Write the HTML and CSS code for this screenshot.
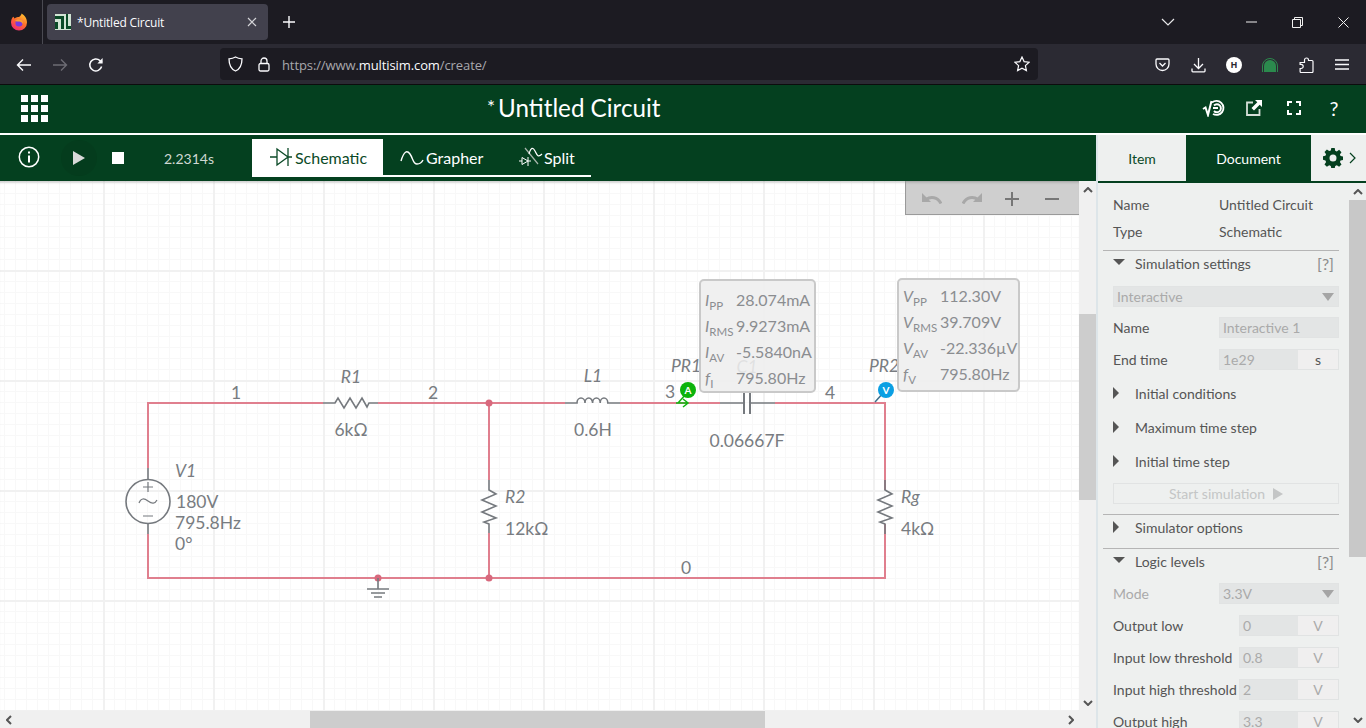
FILE: index.html
```html
<!DOCTYPE html>
<html lang="en">

<head>
  <meta charset="UTF-8">
  <meta name="viewport" content="width=device-width, initial-scale=1.0">
  <title>*Untitled Circuit</title>
  <link rel="stylesheet" href="styles.css">
</head>

<body>
  <!-- browser chrome -->
  <div class="tabbar">
    <div class="ff-slot">
      <svg width="18" height="18" viewBox="0 0 18 18">
        <defs>
          <linearGradient id="ffg" x1="0.8" y1="0" x2="0.2" y2="1">
            <stop offset="0" stop-color="#ffc62e" />
            <stop offset="0.5" stop-color="#ff6a2c" />
            <stop offset="1" stop-color="#f0257c" />
          </linearGradient>
        </defs>
        <path d="M1.500 6.500C2 5 3 4 3.500 3.800L4.500 5.500C6 4 8 4 9 4 10.500 3 11.500 1.800 11.500.5 14.500 2 17 5.500 17 9.500A8 8 0 0 1 1 9.500C1 8.500 1.200 7.500 1.500 6.500z" fill="url(#ffg)" />
        <circle cx="9" cy="10" r="3.600" fill="#7a3ae0" />
        <path d="M5 8c1.600-1.800 4.500-2.200 6.500-1 1.400 1 1.800 2.600 1.200 4-.6-1.400-1.800-2.300-3.400-2.400C8 8.500 6.200 8.600 5 8z" fill="#ffa02c" />
      </svg>
    </div>
    <div class="tab">
      <svg class="favicon" width="16" height="16" viewBox="0 0 16 16">
        <rect width="16" height="16" fill="#d2e4d4" />
        <path d="M0 2h9v13H6V5H0zM0 8h3v7H0z" fill="#0b4a27" />
        <path d="M11 0h2v12h3v3h-5z" fill="#0b4a27" />
      </svg>
      <span class="tab-title">*Untitled Circuit</span>
      <svg class="tab-x" width="10" height="10" viewBox="0 0 10 10"><path d="M1 1l8 8M9 1l-8 8" stroke="#d4d4d8" stroke-width="1.2" /></svg>
    </div>
    <div class="slot"><svg width="14" height="14" viewBox="0 0 14 14"><path d="M7 1v12M1 7h12" stroke="#fbfbfe" stroke-width="1.4" /></svg></div>
    <div class="slot slot-push"><svg width="14" height="8" viewBox="0 0 14 8"><path d="M1 1l6 6 6-6" fill="none" stroke="#e8e8ea" stroke-width="1.2" /></svg></div>
    <div class="win-btn"><svg width="11" height="2" viewBox="0 0 11 2"><path d="M0 1h11" stroke="#f0f0f0" stroke-width="1" /></svg></div>
    <div class="win-btn"><svg width="11" height="11" viewBox="0 0 11 11"><path d="M.5 2.5h8v8h-8zM2.5 2.5v-2h8v8h-2" fill="none" stroke="#f0f0f0" /></svg></div>
    <div class="win-btn"><svg width="11" height="11" viewBox="0 0 11 11"><path d="M.5.5l10 10M10.5.5l-10 10" stroke="#f0f0f0" /></svg></div>
  </div>

  <div class="navbar">
    <div class="slot"><svg width="16" height="14" viewBox="0 0 16 14"><path d="M15 7H2M7 1.5L1.5 7 7 12.5" fill="none" stroke="#fbfbfe" stroke-width="1.4" /></svg></div>
    <div class="slot"><svg width="16" height="14" viewBox="0 0 16 14"><path d="M1 7h13M9 1.5L14.5 7 9 12.5" fill="none" stroke="#6d6c74" stroke-width="1.4" /></svg></div>
    <div class="slot"><svg width="16" height="16" viewBox="0 0 16 16"><path d="M13.600 9.500A6 6 0 1 1 12 3.600L14 5.400" fill="none" stroke="#fbfbfe" stroke-width="1.500" /><path d="M14.600 1v5.400H9.400z" fill="#fbfbfe" /></svg></div>
    <div class="urlbar">
      <svg class="url-shield" width="15" height="16" viewBox="0 0 15 16"><path d="M7.500 1C5.500 2.200 3.300 2.700 1 2.800c0 5 1 10 6.500 12.200C13 12.800 14 7.800 14 2.800 11.700 2.700 9.500 2.200 7.500 1z" fill="none" stroke="#fbfbfe" stroke-width="1.300" /></svg>
      <svg class="url-lock" width="12" height="15" viewBox="0 0 12 15"><path d="M3 6.500V4a3 3 0 0 1 6 0v2.500" fill="none" stroke="#fbfbfe" stroke-width="1.300" /><rect x="1" y="6.500" width="10" height="7.500" rx="1.500" fill="none" stroke="#fbfbfe" stroke-width="1.300" /></svg>
      <span class="url-text">https://www.<b>multisim.com</b>/create/</span>
      <svg class="url-star" width="16" height="16" viewBox="0 0 16 16"><path d="M8 1l2.100 4.600 5 .6-3.700 3.400 1 4.900L8 12.100l-4.400 2.400 1-4.900L.9 6.200l5-.6z" fill="none" stroke="#fbfbfe" stroke-width="1.200" /></svg>
    </div>
    <div class="slot"><svg width="15" height="14" viewBox="0 0 15 14"><path d="M2 1h11a1 1 0 0 1 1 1v4a6.500 6.500 0 0 1-13 0V2a1 1 0 0 1 1-1z" fill="none" stroke="#fbfbfe" stroke-width="1.300" /><path d="M4.500 5l3 3 3-3" fill="none" stroke="#fbfbfe" stroke-width="1.300" /></svg></div>
    <div class="slot"><svg width="15" height="16" viewBox="0 0 15 16"><path d="M7.500 1v10M3 7l4.500 4.500L12 7M1 11.500V14a.8.8 0 0 0 .8.800h11.400A.8.800 0 0 0 14 14v-2.500" fill="none" stroke="#fbfbfe" stroke-width="1.300" /></svg></div>
    <div class="slot"><span class="h-badge">H</span></div>
    <div class="slot"><svg width="16" height="14" viewBox="0 0 16 14"><path d="M2 14V8a6 6 0 0 1 12 0v6z" fill="#2b8a4d" /><path d="M.5 14V8a7.500 7.500 0 0 1 15 0v6" fill="none" stroke="#2b8a4d" /></svg></div>
    <div class="slot"><svg width="15" height="16" viewBox="0 0 15 16"><path d="M5.500 3.500V3a2 2 0 0 1 4 0v.5H13a1 1 0 0 1 1 1v10a1 1 0 0 1-1 1H2a1 1 0 0 1-.9-1v-3h1a2 2 0 0 0 0-4.200h-1V5.500h4.400z" fill="none" stroke="#fbfbfe" stroke-width="1.200" /></svg></div>
    <div class="slot"><svg width="14" height="11" viewBox="0 0 14 11"><path d="M0 1h14M0 5.500h14M0 10h14" stroke="#fbfbfe" stroke-width="1.300" /></svg></div>
  </div>

  <!-- app header -->
  <header class="app-header">
    <svg class="waffle" width="27" height="27" viewBox="0 0 27 27" fill="#fff">
      <rect width="7" height="7" /><rect x="10" width="7" height="7" /><rect x="20" width="7" height="7" />
      <rect y="10" width="7" height="7" /><rect x="10" y="10" width="7" height="7" /><rect x="20" y="10" width="7" height="7" />
      <rect y="20" width="7" height="7" /><rect x="10" y="20" width="7" height="7" /><rect x="20" y="20" width="7" height="7" />
    </svg>
    <h1 class="app-title"><span class="star">*</span>Untitled Circuit</h1>
    <div class="app-actions">
      <div class="slot-40"><svg width="24" height="18" viewBox="0 0 24 18"><path d="M1 10l2.500-1.500L6 16 9.500 2" fill="none" stroke="#fff" stroke-width="2" /><path d="M10 3.500a7 7 0 1 1 1 11.500M12 6.500a4 4 0 1 1 0 5.500M11 9h5" fill="none" stroke="#fff" stroke-width="1.900" /></svg></div>
      <div class="slot-40"><svg width="16" height="16" viewBox="0 0 16 16"><path d="M7 2.500H1v12.500h12.500V9" fill="none" stroke="#d5dfd8" stroke-width="1.800" /><path d="M9 0h7v7l-2.300-2.300L8 10.500 5.500 8l5.800-5.700z" fill="#fff" /></svg></div>
      <div class="slot-40"><svg width="14" height="14" viewBox="0 0 14 14"><path d="M1 5V1h4M9 1h4v4M13 9v4H9M5 13H1V9" fill="none" stroke="#fff" stroke-width="2" /></svg></div>
      <div class="slot-40 help">?</div>
    </div>
  </header>

  <div class="workspace">
    <div class="left-col">
      <div class="toolbar">
        <svg class="tb-info" width="22" height="22" viewBox="0 0 22 22"><circle cx="11" cy="11" r="9.700" fill="none" stroke="#fff" stroke-width="1.500" /><rect x="10" y="9.500" width="2" height="7" fill="#fff" /><rect x="10" y="5.500" width="2" height="2" fill="#fff" /></svg>
        <div class="tb-play"><svg width="12" height="14" viewBox="0 0 12 14"><path d="M0 0l12 7-12 7z" fill="#d9d9d9" /></svg></div>
        <div class="tb-stop"></div>
        <span class="tb-time">2.2314s</span>
        <div class="tb-tabs">
          <div class="tb-tab active">
            <svg width="22" height="20" viewBox="0 0 22 20"><path d="M0 10h7M7 2v16l11-8zM18 1v18M18 10h4" fill="none" stroke="#0b4a27" stroke-width="1.300" /></svg>
            <span>Schematic</span>
          </div>
          <div class="tb-tab grapher">
            <svg width="24" height="16" viewBox="0 0 24 16"><path d="M1 12C4 2 7 1 10 5s3 10 7 10 5-2 6-4" fill="none" stroke="#fff" stroke-width="1.400" /></svg>
            <span>Grapher</span>
          </div>
          <div class="tb-tab split">
            <svg width="24" height="22" viewBox="0 0 24 22"><path d="M6 2L19 18" stroke="#a9b5ad" stroke-width="1.200" /><path d="M0 15h3M3 11.500v7l6-3.500zM9 11v9M9 15h3" fill="none" stroke="#fff" stroke-width="1" /><path d="M10 8c2-7 4-7 6-3s3 7 7 3" fill="none" stroke="#fff" stroke-width="1.200" /></svg>
            <span>Split</span>
          </div>
        </div>
      </div>

      <div class="canvas-wrap">
        <div class="canvas">
          <svg class="schematic" width="1079" height="530" viewBox="0 181 1079 530">
            <!-- wires -->
            <path class="wire" d="M148 468V403H323M378 403H565M620 403H720M775 403H885V490M885 524V578H148V534" />
            <path class="wire" d="M489 403V480M489 533V578" />
            <circle class="node" cx="489" cy="403" r="3.500" />
            <circle class="node" cx="489" cy="578" r="3.500" />
            <circle class="node" cx="378" cy="578" r="3.500" />

            <!-- R1 -->
            <path class="part" d="M323 403H335L338 398 344 408 350 398 356 408 362 398 367 407 369 403H378" />
            <!-- L1 -->
            <path class="part" d="M565 403H577a4 5 0 0 1 8 0a3.800 5 0 0 1 7.600 0a3.800 5 0 0 1 7.600 0a3.800 5 0 0 1 7.600 0H620" />
            <!-- C1 -->
            <path class="part" d="M720 403H743M750 403H775" />
            <path class="part plate" d="M744 392V414M750 392V414" />
            <!-- R2 -->
            <path class="part" d="M489 480V490L496 494 482 500 496 506 482 512 496 518 484 522 489 524V533" />
            <!-- Rg -->
            <path class="part" d="M885 480V490L892 494 878 500 892 506 878 512 892 518 880 522 885 524V534" />
            <!-- V1 -->
            <path class="part" d="M148 468V479M148 524V534" />
            <circle class="part" cx="148" cy="501.500" r="22" />
            <path class="part thin" d="M143 487h10M148 482v10M143 516h10M139 503c2-5 5-5 9-2s7 3 9-1" />
            <!-- ground -->
            <path class="part" d="M378 578V589M367 589H389M371 593H385M374 597H382" />

            <!-- probes -->
            <path class="probe-a" d="M678 403L686 394M676 403H687M683 399L688 403 683 407" />
            <path class="probe-v" d="M875 402L884 392" />
            <circle class="dot-a" cx="688" cy="390" r="8" />
            <circle class="dot-v" cx="886" cy="390" r="8" />
            <text class="dot-txt" x="688" y="394">A</text>
            <text class="dot-txt" x="886" y="394">V</text>

            <!-- labels -->
            <text class="lbl mid" x="236" y="399">1</text>
            <text class="lbl mid" x="433" y="399">2</text>
            <text class="lbl mid" x="670" y="398">3</text>
            <text class="lbl mid" x="830" y="399">4</text>
            <text class="lbl mid" x="686" y="574">0</text>
            <text class="lbl ital mid" x="351" y="383">R1</text>
            <text class="lbl mid" x="351" y="436">6kΩ</text>
            <text class="lbl ital mid" x="593" y="382">L1</text>
            <text class="lbl mid" x="593" y="436">0.6H</text>
            <text class="lbl ital mid" x="747" y="373">C1</text>
            <text class="lbl mid" x="747" y="447">0.06667F</text>
            <text class="lbl ital" x="175" y="477">V1</text>
            <text class="lbl" x="176" y="508">180V</text>
            <text class="lbl" x="175" y="529">795.8Hz</text>
            <text class="lbl" x="175" y="550">0°</text>
            <text class="lbl ital" x="505" y="503">R2</text>
            <text class="lbl" x="505" y="535">12kΩ</text>
            <text class="lbl ital" x="901" y="503">Rg</text>
            <text class="lbl" x="901" y="535">4kΩ</text>
            <text class="lbl ital mid" x="686" y="372">PR1</text>
            <text class="lbl ital mid" x="884" y="372">PR2</text>
          </svg>

          <div class="probe-box box-pr1">
            <i>I<sub>PP</sub></i><span>28.074mA</span>
            <i>I<sub>RMS</sub></i><span>9.9273mA</span>
            <i>I<sub>AV</sub></i><span>-5.5840nA</span>
            <i>f<sub>I</sub></i><span>795.80Hz</span>
          </div>
          <div class="probe-box box-pr2">
            <i>V<sub>PP</sub></i><span>112.30V</span>
            <i>V<sub>RMS</sub></i><span>39.709V</span>
            <i>V<sub>AV</sub></i><span>-22.336µV</span>
            <i>f<sub>V</sub></i><span>795.80Hz</span>
          </div>

          <div class="zoom-bar">
            <div class="zoom-btn"><svg width="20" height="11" viewBox="0 0 20 11"><path d="M0 0v9h9z" fill="#a8a8a8" /><path d="M19 10.500C15.500 4 9 3 4 6.500" fill="none" stroke="#a8a8a8" stroke-width="3" /></svg></div>
            <div class="zoom-btn"><svg width="20" height="11" viewBox="0 0 20 11"><path d="M20 0v9h-9z" fill="#a8a8a8" /><path d="M1 10.500C4.500 4 11 3 16 6.500" fill="none" stroke="#a8a8a8" stroke-width="3" /></svg></div>
            <div class="zoom-btn"><svg width="14" height="14" viewBox="0 0 14 14"><path d="M7 0v14M0 7h14" stroke="#777" stroke-width="2" /></svg></div>
            <div class="zoom-btn"><svg width="14" height="14" viewBox="0 0 14 14"><path d="M0 7h14" stroke="#777" stroke-width="2" /></svg></div>
          </div>
        </div>

        <div class="vscroll">
          <div class="arrow"><svg width="10" height="6" viewBox="0 0 10 6"><path d="M1 5l4-4 4 4" class="chev" /></svg></div>
          <div class="vthumb"></div>
          <div class="arrow arrow-end"><svg width="10" height="6" viewBox="0 0 10 6"><path d="M1 1l4 4 4-4" class="chev" /></svg></div>
        </div>
        <div class="hscroll">
          <div class="arrow"><svg width="6" height="10" viewBox="0 0 6 10"><path d="M5 1L1 5l4 4" class="chev" /></svg></div>
          <div class="hthumb"></div>
          <div class="arrow arrow-right"><svg width="6" height="10" viewBox="0 0 6 10"><path d="M1 1l4 4-4 4" class="chev" /></svg></div>
        </div>
        <div class="corner"></div>
      </div>
    </div>

    <aside class="panel">
      <div class="panel-tabs">
        <div class="ptab">Item</div>
        <div class="ptab active">Document</div>
        <div class="ptab-gear">
          <svg width="20" height="20" viewBox="0 0 20 20"><path d="M8.300 0h3.400l.5 2.700 1.600.7 2.300-1.600 2.400 2.400-1.600 2.300.7 1.600 2.400.5v3.400l-2.400.5-.7 1.600 1.600 2.300-2.400 2.400-2.300-1.600-1.600.7-.5 2.600H8.300l-.5-2.600-1.600-.7-2.300 1.600-2.400-2.400 1.600-2.300-.7-1.600L0 11.700V8.300l2.400-.5.700-1.600-1.600-2.300 2.400-2.400 2.300 1.600 1.600-.7zM10 6.500a3.500 3.500 0 1 0 0 7 3.500 3.500 0 0 0 0-7z" fill="#04401f" fill-rule="evenodd" /></svg>
          <svg width="7" height="12" viewBox="0 0 7 12"><path d="M1 1l5 5-5 5" fill="none" stroke="#04401f" stroke-width="1.200" /></svg>
        </div>
      </div>
      <div class="panel-main">
        <div class="panel-body">
          <div class="info-row"><span>Name</span><span class="info-val">Untitled Circuit</span></div>
          <div class="info-row"><span>Type</span><span class="info-val">Schematic</span></div>

          <div class="sec-head open"><span class="caret-down"></span>Simulation settings<span class="sec-help">[?]</span></div>
          <div class="select wide first">Interactive<span class="sel-arrow"></span></div>
          <div class="form-row after-select"><label>Name</label><div class="field w120">Interactive 1</div></div>
          <div class="form-row"><label>End time</label><div class="unit-field w120"><span class="val">1e29</span><span class="unit dark">s</span></div></div>
          <div class="sub-list">
            <div class="sub-row"><span class="caret-right"></span>Initial conditions</div>
            <div class="sub-row"><span class="caret-right"></span>Maximum time step</div>
            <div class="sub-row"><span class="caret-right"></span>Initial time step</div>
          </div>
          <div class="start-btn">Start simulation<span class="start-arrow"></span></div>

          <div class="sec-head"><span class="caret-right"></span>Simulator options</div>

          <div class="sec-head open"><span class="caret-down"></span>Logic levels<span class="sec-help">[?]</span></div>
          <div class="form-row first"><label class="off">Mode</label><div class="select w120">3.3V<span class="sel-arrow"></span></div></div>
          <div class="form-row"><label>Output low</label><div class="unit-field w100"><span class="val">0</span><span class="unit">V</span></div></div>
          <div class="form-row"><label>Input low threshold</label><div class="unit-field w100"><span class="val">0.8</span><span class="unit">V</span></div></div>
          <div class="form-row"><label>Input high threshold</label><div class="unit-field w100"><span class="val">2</span><span class="unit">V</span></div></div>
          <div class="form-row"><label>Output high</label><div class="unit-field w100"><span class="val">3.3</span><span class="unit">V</span></div></div>
        </div>
        <div class="pscroll">
          <div class="arrow"><svg width="10" height="6" viewBox="0 0 10 6"><path d="M1 5l4-4 4 4" class="chev" /></svg></div>
          <div class="pthumb"></div>
          <div class="arrow arrow-end"><svg width="10" height="6" viewBox="0 0 10 6"><path d="M1 1l4 4 4-4" class="chev" /></svg></div>
        </div>
      </div>
    </aside>
  </div>
</body>

</html>
```

FILE: styles.css
```css
* {
  box-sizing: border-box;
}

html,
body {
  margin: 0;
  height: 100%;
  overflow: hidden;
}

body {
  display: flex;
  flex-direction: column;
  font-family: "Lato", "Open Sans", sans-serif;
  background-color: #fff;
}

/* browser chrome */
.tabbar {
  display: flex;
  align-items: center;
  height: 44px;
  background-color: #1c1b22;
  flex-shrink: 0;
}

.ff-slot {
  width: 43px;
  height: 44px;
  display: flex;
  align-items: center;
  justify-content: center;
  padding-right: 4px;
  border-right: 1px solid #4a4a52;
}

.tab {
  display: flex;
  align-items: center;
  width: 221px;
  height: 36px;
  margin-left: 4px;
  padding: 0 11px 0 8px;
  background-color: #42414d;
  border-radius: 4px;
}

.tab-title {
  margin-left: 6px;
  color: #fbfbfe;
  font: 12px "Open Sans", sans-serif;
  letter-spacing: -0.2px;
}

.tab-x {
  margin-left: auto;
}

.slot {
  width: 36px;
  height: 36px;
  flex-shrink: 0;
  display: flex;
  align-items: center;
  justify-content: center;
}

.tabbar > .slot {
  margin-left: 3px;
}

.tabbar > .slot-push {
  margin-left: auto;
  margin-right: 42px;
}

.win-btn {
  width: 46px;
  height: 44px;
  display: flex;
  align-items: center;
  justify-content: center;
}

.navbar {
  display: flex;
  align-items: center;
  height: 41px;
  padding: 1px 6px 0;
  background-color: #2b2a33;
  border-bottom: 1px solid #0c0c0d;
  flex-shrink: 0;
}

.urlbar {
  display: flex;
  align-items: center;
  width: 818px;
  height: 32px;
  margin: -1px 106px 0;
  padding: 0 8px;
  background-color: #1c1b22;
  border-radius: 4px;
}

.url-shield {
  margin-right: 15px;
}

.url-text {
  margin: 2px 0 0 12px;
  color: #a8a8ad;
  font: 13px "Open Sans", sans-serif;
  letter-spacing: -0.1px;
}

.url-text b {
  color: #fbfbfe;
  font-weight: 400;
}

.url-star {
  margin-left: auto;
}

.h-badge {
  width: 16px;
  height: 16px;
  display: flex;
  align-items: center;
  justify-content: center;
  border-radius: 50%;
  background-color: #fff;
  color: #2b2a33;
  font: 700 9px "Open Sans", sans-serif;
}

/* app header */
.app-header {
  display: flex;
  align-items: center;
  height: 50px;
  padding: 0 12px 2px 21px;
  background-color: #04401f;
  border-bottom: 2px solid #fff;
  flex-shrink: 0;
}

.app-title {
  margin: 0 0 0 439px;
  color: #fff;
  font-size: 24.200px;
  font-weight: 400;
  line-height: 1;
}

.star {
  font-size: 19px;
  vertical-align: 3px;
  margin-right: 3px;
}

.app-actions {
  display: flex;
  margin-left: auto;
}

.slot-40 {
  width: 40px;
  height: 30px;
  display: flex;
  align-items: center;
  justify-content: center;
}

.help {
  color: #fff;
  font-size: 20px;
}

.workspace {
  flex: 1;
  display: flex;
  min-height: 0;
}

.left-col {
  width: 1096px;
  display: flex;
  flex-direction: column;
}

/* simulation toolbar */
.toolbar {
  display: flex;
  align-items: center;
  height: 46px;
  padding-left: 18px;
  background-color: #04401f;
  flex-shrink: 0;
}

.tb-info {
  margin-top: -2px;
}

.tb-play {
  width: 36px;
  height: 36px;
  margin-left: 21px;
  display: flex;
  align-items: center;
  justify-content: center;
  border-radius: 50%;
  background-color: #043c1d;
}

.tb-stop {
  width: 12px;
  height: 12px;
  margin-left: 15px;
  background-color: #fff;
}

.tb-time {
  margin-left: 40px;
  color: #cfd8d2;
  font-size: 14px;
}

.tb-tabs {
  display: flex;
  align-self: flex-start;
  height: 38px;
  margin: 4px 0 0 38px;
  border-bottom: 2px solid #fff;
}

.tb-tab {
  display: flex;
  align-items: center;
  gap: 3px;
  height: 38px;
  padding-bottom: 2px;
  flex-shrink: 0;
  color: #fff;
  font-size: 16px;
}

.tb-tab.active {
  width: 131px;
  padding-left: 18px;
  background-color: #fff;
  color: #0b4a27;
}

.tb-tab.grapher {
  width: 135px;
  padding-left: 17px;
  gap: 2px;
}

.tb-tab.split {
  width: 73px;
  padding-left: 1px;
  gap: 1px;
}

/* schematic area */
.canvas-wrap {
  flex: 1;
  display: grid;
  grid-template-columns: 1079px 17px;
  grid-template-rows: 530px 17px;
  min-height: 0;
}

.canvas {
  position: relative;
  overflow: hidden;
  box-shadow: inset 0 3px 3px -2px rgba(0, 0, 0, 0.25);
  background-color: #fff;
  background-image:
    linear-gradient(to right, #f1f1f1 2px, transparent 2px),
    linear-gradient(to bottom, #f1f1f1 2px, transparent 2px),
    linear-gradient(to right, #f8f8f8 1px, transparent 1px),
    linear-gradient(to bottom, #f8f8f8 1px, transparent 1px);
  background-size: 110px 110px, 110px 110px, 11px 11px, 11px 11px;
  background-position: -7px 89px, -7px 89px, -7px 1px, -7px 1px;
}

.schematic {
  position: absolute;
  left: 0;
  top: 0;
}

.wire {
  fill: none;
  stroke: #e07f8e;
  stroke-width: 2;
}

.node {
  fill: #d8697d;
}

.part {
  fill: none;
  stroke: #75797e;
  stroke-width: 1.600;
}

.part.plate {
  stroke-width: 2;
}

.part.thin {
  stroke-width: 1.200;
}

.lbl {
  fill: #787c81;
  font-family: "Lato", sans-serif;
  font-size: 17.500px;
}

.mid {
  text-anchor: middle;
}

.ital {
  font-style: italic;
}

.probe-a {
  fill: none;
  stroke: #11b511;
  stroke-width: 1.500;
}

.probe-v {
  stroke: #3f6f8a;
  stroke-width: 1.500;
}

.dot-a {
  fill: #0bb30b;
}

.dot-v {
  fill: #0a9fe3;
}

.dot-txt {
  fill: #fff;
  font-size: 10px;
  font-weight: 700;
  text-anchor: middle;
}

.probe-box {
  position: absolute;
  display: grid;
  grid-template-rows: repeat(4, 26px);
  align-items: center;
  padding: 6px 0 0 4px;
  background-color: rgba(238, 238, 238, 0.88);
  border: 2px solid #c9c9c9;
  border-radius: 5px;
  color: #8b8d90;
  font-size: 16px;
  line-height: 26px;
}

.probe-box i sub {
  font-style: normal;
  font-size: 11.500px;
  line-height: 0;
}

.box-pr1 {
  left: 699px;
  top: 98px;
  width: 117px;
  height: 114px;
  grid-template-columns: 31px auto;
}

.box-pr2 {
  left: 897px;
  top: 97px;
  width: 123px;
  height: 114px;
  padding-top: 3px;
  grid-template-columns: 37px auto;
}

.zoom-bar {
  position: absolute;
  top: 0;
  right: 0;
  width: 174px;
  height: 34px;
  display: flex;
  align-items: center;
  padding: 2px 0 0 6px;
  background-color: #cfcfcf;
  border-left: 1px solid #9a9a9a;
  border-bottom: 1px solid #9a9a9a;
  box-shadow: inset 0 3px 3px -2px rgba(0, 0, 0, 0.25);
}

.zoom-btn {
  width: 40px;
  display: flex;
  justify-content: center;
}

/* scrollbars */
.vscroll,
.pscroll {
  display: flex;
  flex-direction: column;
  background-color: #f0f0f0;
}

.hscroll {
  position: relative;
  display: flex;
  background-color: #f0f0f0;
}

.arrow {
  width: 17px;
  height: 17px;
  flex-shrink: 0;
  display: flex;
  align-items: center;
  justify-content: center;
}

.arrow-end {
  margin-top: auto;
}

.arrow-right {
  margin-left: auto;
}

.chev {
  fill: none;
  stroke: #555;
  stroke-width: 2;
}

.vthumb {
  height: 186px;
  margin-top: 116px;
  background-color: #cdcdcd;
}

.hthumb {
  width: 455px;
  margin-left: 293px;
  background-color: #cdcdcd;
}

.corner {
  background-color: #f0f0f0;
}

/* right panel */
.panel {
  width: 270px;
  display: flex;
  flex-direction: column;
  background-color: #eef0ef;
  border-left: 2px solid #dde5e9;
  color: #555;
  font-size: 14px;
}

.panel-tabs {
  display: flex;
  height: 48px;
  border-bottom: 2px solid #04401f;
  flex-shrink: 0;
}

.ptab {
  display: flex;
  align-items: center;
  justify-content: center;
  width: 88px;
  height: 46px;
  padding-top: 1px;
  color: #0b4a27;
  font-size: 14px;
}

.ptab.active {
  width: 125px;
  background-color: #04401f;
  color: #fff;
}

.ptab-gear {
  display: flex;
  align-items: center;
  gap: 6px;
  padding-left: 12px;
}

.panel-main {
  flex: 1;
  display: flex;
  min-height: 0;
}

.panel-body {
  width: 251px;
  padding: 8px 10px 0 5px;
  overflow: hidden;
}

.pscroll {
  width: 17px;
  background-color: #eef0ef;
}

.pthumb {
  height: 357px;
  background-color: #c8c8c8;
}

.info-row {
  display: flex;
  align-items: center;
  height: 27px;
  padding-left: 10px;
}

.info-val {
  margin-left: auto;
  width: 120px;
}

.sec-head {
  display: flex;
  align-items: center;
  height: 29px;
  margin-top: 5px;
  padding: 0 0 4px 10px;
  border-top: 1px solid #b5b5b5;
}

.caret-down,
.caret-right {
  display: inline-block;
  width: 22px;
  flex-shrink: 0;
}

.caret-down::before {
  content: "";
  display: block;
  width: 0;
  border-left: 6px solid transparent;
  border-right: 6px solid transparent;
  border-top: 6px solid #555;
  margin-top: -3px;
}

.caret-right::before {
  content: "";
  display: block;
  width: 0;
  border-top: 6px solid transparent;
  border-bottom: 6px solid transparent;
  border-left: 6px solid #555;
}

.sec-help {
  margin-left: auto;
  margin-right: 5px;
  color: #8c8c8c;
  font-size: 16px;
}

.select,
.field,
.unit-field,
.start-btn {
  height: 21px;
  border: 1px solid #e1e3e3;
  background-color: #e3e5e5;
  color: #aaa;
  font-size: 14px;
  line-height: 19px;
}

.select {
  position: relative;
  padding-left: 3px;
}

.select.wide {
  margin-left: 10px;
}

.first {
  margin-top: 7px;
}

.sel-arrow {
  position: absolute;
  right: 4px;
  top: 6px;
  width: 0;
  border-left: 6px solid transparent;
  border-right: 6px solid transparent;
  border-top: 8px solid #a5a5a5;
}

.form-row {
  display: flex;
  align-items: center;
  justify-content: space-between;
  height: 21px;
  margin-top: 11px;
  padding-left: 10px;
  white-space: nowrap;
}

.form-row.after-select {
  margin-top: 10px;
}

.form-row.first {
  margin-top: 6px;
}

.form-row .off {
  color: #aaa;
}

.field {
  padding-left: 3px;
}

.w120 {
  width: 120px;
}

.w100 {
  width: 100px;
}

.unit-field {
  display: flex;
}

.val {
  flex: 1;
  padding-left: 3px;
}

.unit {
  width: 40px;
  background-color: #f0efef;
  text-align: center;
}

.unit.dark {
  color: #555;
}

.sub-list {
  margin-top: 6px;
}

.sub-row {
  display: flex;
  align-items: center;
  height: 34px;
  padding-left: 10px;
}

.start-btn {
  display: flex;
  align-items: center;
  justify-content: center;
  gap: 8px;
  margin: 5px 0 10px 10px;
  background-color: #eef0ef;
  color: #c4c6c6;
}

.start-arrow {
  width: 0;
  border-top: 6px solid transparent;
  border-bottom: 6px solid transparent;
  border-left: 10px solid #c4c6c6;
}
```
